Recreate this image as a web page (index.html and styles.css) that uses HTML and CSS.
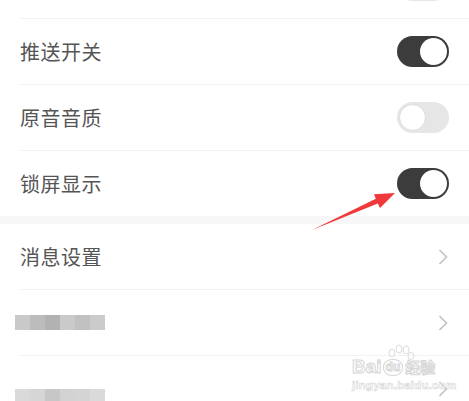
FILE: index.html
```html
<!DOCTYPE html>
<html lang="zh-CN">
<head>
<meta charset="utf-8">
<title>设置</title>
<link rel="stylesheet" href="styles.css">
</head>
<body>
<div class="page">
  <section class="group group-top">
    <div class="row">
      <span class="label"></span>
      <span class="switch off"><span class="knob"></span></span>
    </div>
    <div class="row">
      <span class="label">推送开关</span>
      <span class="switch on"><span class="knob"></span></span>
    </div>
    <div class="row">
      <span class="label">原音音质</span>
      <span class="switch off"><span class="knob"></span></span>
    </div>
    <div class="row last">
      <span class="label">锁屏显示</span>
      <span class="switch on"><span class="knob"></span></span>
    </div>
  </section>
  <div class="gap"></div>
  <section class="group">
    <div class="row">
      <span class="label">消息设置</span>
      <svg class="chev" width="10" height="16" viewBox="0 0 10 16"><polyline points="1.5,1 8.5,8 1.5,15" fill="none" stroke="#c2c2c2" stroke-width="1.6"/></svg>
    </div>
    <div class="row">
      <span class="mosaic m1"><i></i><i></i><i></i><i></i><i></i><i></i></span>
      <svg class="chev" width="10" height="16" viewBox="0 0 10 16"><polyline points="1.5,1 8.5,8 1.5,15" fill="none" stroke="#c2c2c2" stroke-width="1.6"/></svg>
    </div>
    <div class="row last">
      <span class="mosaic m2"><i></i><i></i><i></i><i></i><i></i><i></i><i></i><i></i><i></i><i></i><i></i><i></i></span>
      <svg class="chev" width="10" height="16" viewBox="0 0 10 16"><polyline points="1.5,1 8.5,8 1.5,15" fill="none" stroke="#c2c2c2" stroke-width="1.6"/></svg>
    </div>
  </section>

  <svg class="annot" width="469" height="401" viewBox="0 0 469 401">
    <polygon points="312,230 375.8,198.8 374,194.2 395,193 380,208 377.8,203.4" fill="#f0393a"/>
    <g fill="none" stroke="#dcdcdc" stroke-width="1">
      <ellipse cx="392" cy="353" rx="3" ry="4"/>
      <ellipse cx="399" cy="349" rx="3" ry="4"/>
      <ellipse cx="406" cy="350" rx="3" ry="4"/>
      <ellipse cx="411" cy="356" rx="3" ry="3.5"/>
    </g>
  </svg>

  <div class="watermark">
    <div class="wm-logo"><span>Bai</span><span class="paw">du</span><span class="wm-cn">经验</span></div>
    <div class="wm-url">jingyan.baidu.com</div>
  </div>
</div>
</body>
</html>
```
FILE: styles.css
```css
html, body {
  margin: 0;
  padding: 0;
  background: #ffffff;
}
body {
  font-family: "Noto Sans CJK SC", "Noto Sans", sans-serif;
  overflow: hidden;
}
.page {
  position: relative;
  width: 469px;
  height: 401px;
  overflow: hidden;
}
.group {
  display: flex;
  flex-direction: column;
}
.group-top {
  margin-top: -47px;
}
.row {
  height: 65px;
  margin-left: 20px;
  padding-right: 20px;
  border-bottom: 1px solid #f3f3f3;
  display: flex;
  align-items: center;
  justify-content: space-between;
}
.row.last {
  border-bottom: none;
}
.label {
  font-size: 20px;
  color: #555555;
  letter-spacing: 0.5px;
}
.gap {
  height: 8px;
  background: #f7f7f7;
}
.switch {
  width: 52px;
  height: 31px;
  border-radius: 16px;
  box-sizing: border-box;
  display: flex;
  align-items: center;
  padding: 2px;
}
.switch.on {
  background: #3c3c3c;
  justify-content: flex-end;
}
.switch.off {
  background: #e6e6e6;
  justify-content: flex-start;
}
.knob {
  width: 27px;
  height: 27px;
  border-radius: 50%;
  background: #ffffff;
  box-sizing: border-box;
}
.switch.off .knob {
  border: 1px solid #dcdcdc;
}
.chev {
  display: block;
  margin-right: 1px;
}
.mosaic {
  display: grid;
  grid-template-columns: repeat(6, 15px);
  margin-left: -5px;
}
.mosaic i {
  display: block;
  height: 15px;
}
.m1 i:nth-child(1) { background: #c9c9c9; }
.m1 i:nth-child(2) { background: #bcbcbc; }
.m1 i:nth-child(3) { background: #b2b2b2; }
.m1 i:nth-child(4) { background: #cacaca; }
.m1 i:nth-child(5) { background: #c1c1c1; }
.m1 i:nth-child(6) { background: #cbcbcb; }
.m2 {
  margin-top: 26px;
}
.m2 i { height: 13px; }
.m2 i:nth-child(1) { background: #dadada; }
.m2 i:nth-child(2) { background: #d6d6d6; }
.m2 i:nth-child(3) { background: #c7c7c7; }
.m2 i:nth-child(4) { background: #d2d2d2; }
.m2 i:nth-child(5) { background: #d4d4d4; }
.m2 i:nth-child(6) { background: #dadada; }
.m2 i:nth-child(7) { background: #e0e0e0; }
.m2 i:nth-child(8) { background: #d8d8d8; }
.m2 i:nth-child(9) { background: #c8c8c8; }
.m2 i:nth-child(10) { background: #d3d3d3; }
.m2 i:nth-child(11) { background: #d6d6d6; }
.m2 i:nth-child(12) { background: #dcdcdc; }
.annot {
  position: absolute;
  left: 0;
  top: 0;
  pointer-events: none;
}
.watermark {
  position: absolute;
  left: 352px;
  top: 357px;
  color: rgba(255, 255, 255, 0.9);
  font-family: "Liberation Sans", "Noto Sans CJK SC", sans-serif;
  font-weight: bold;
  pointer-events: none;
}
.wm-logo {
  display: flex;
  align-items: center;
  gap: 1px;
  font-size: 19px;
  line-height: 20px;
  -webkit-text-stroke: 1px #d6d6d6;
}
.wm-logo .paw {
  font-size: 12px;
  border: 1px solid #d6d6d6;
  border-radius: 45%;
  padding: 0 2px;
  line-height: 15px;
}
.wm-cn {
  font-family: "Noto Sans CJK SC", sans-serif;
  font-size: 15px;
  margin-left: 1px;
}
.wm-url {
  font-size: 11.5px;
  line-height: 16px;
  letter-spacing: 0.2px;
  -webkit-text-stroke: 0.6px #d6d6d6;
}
```
